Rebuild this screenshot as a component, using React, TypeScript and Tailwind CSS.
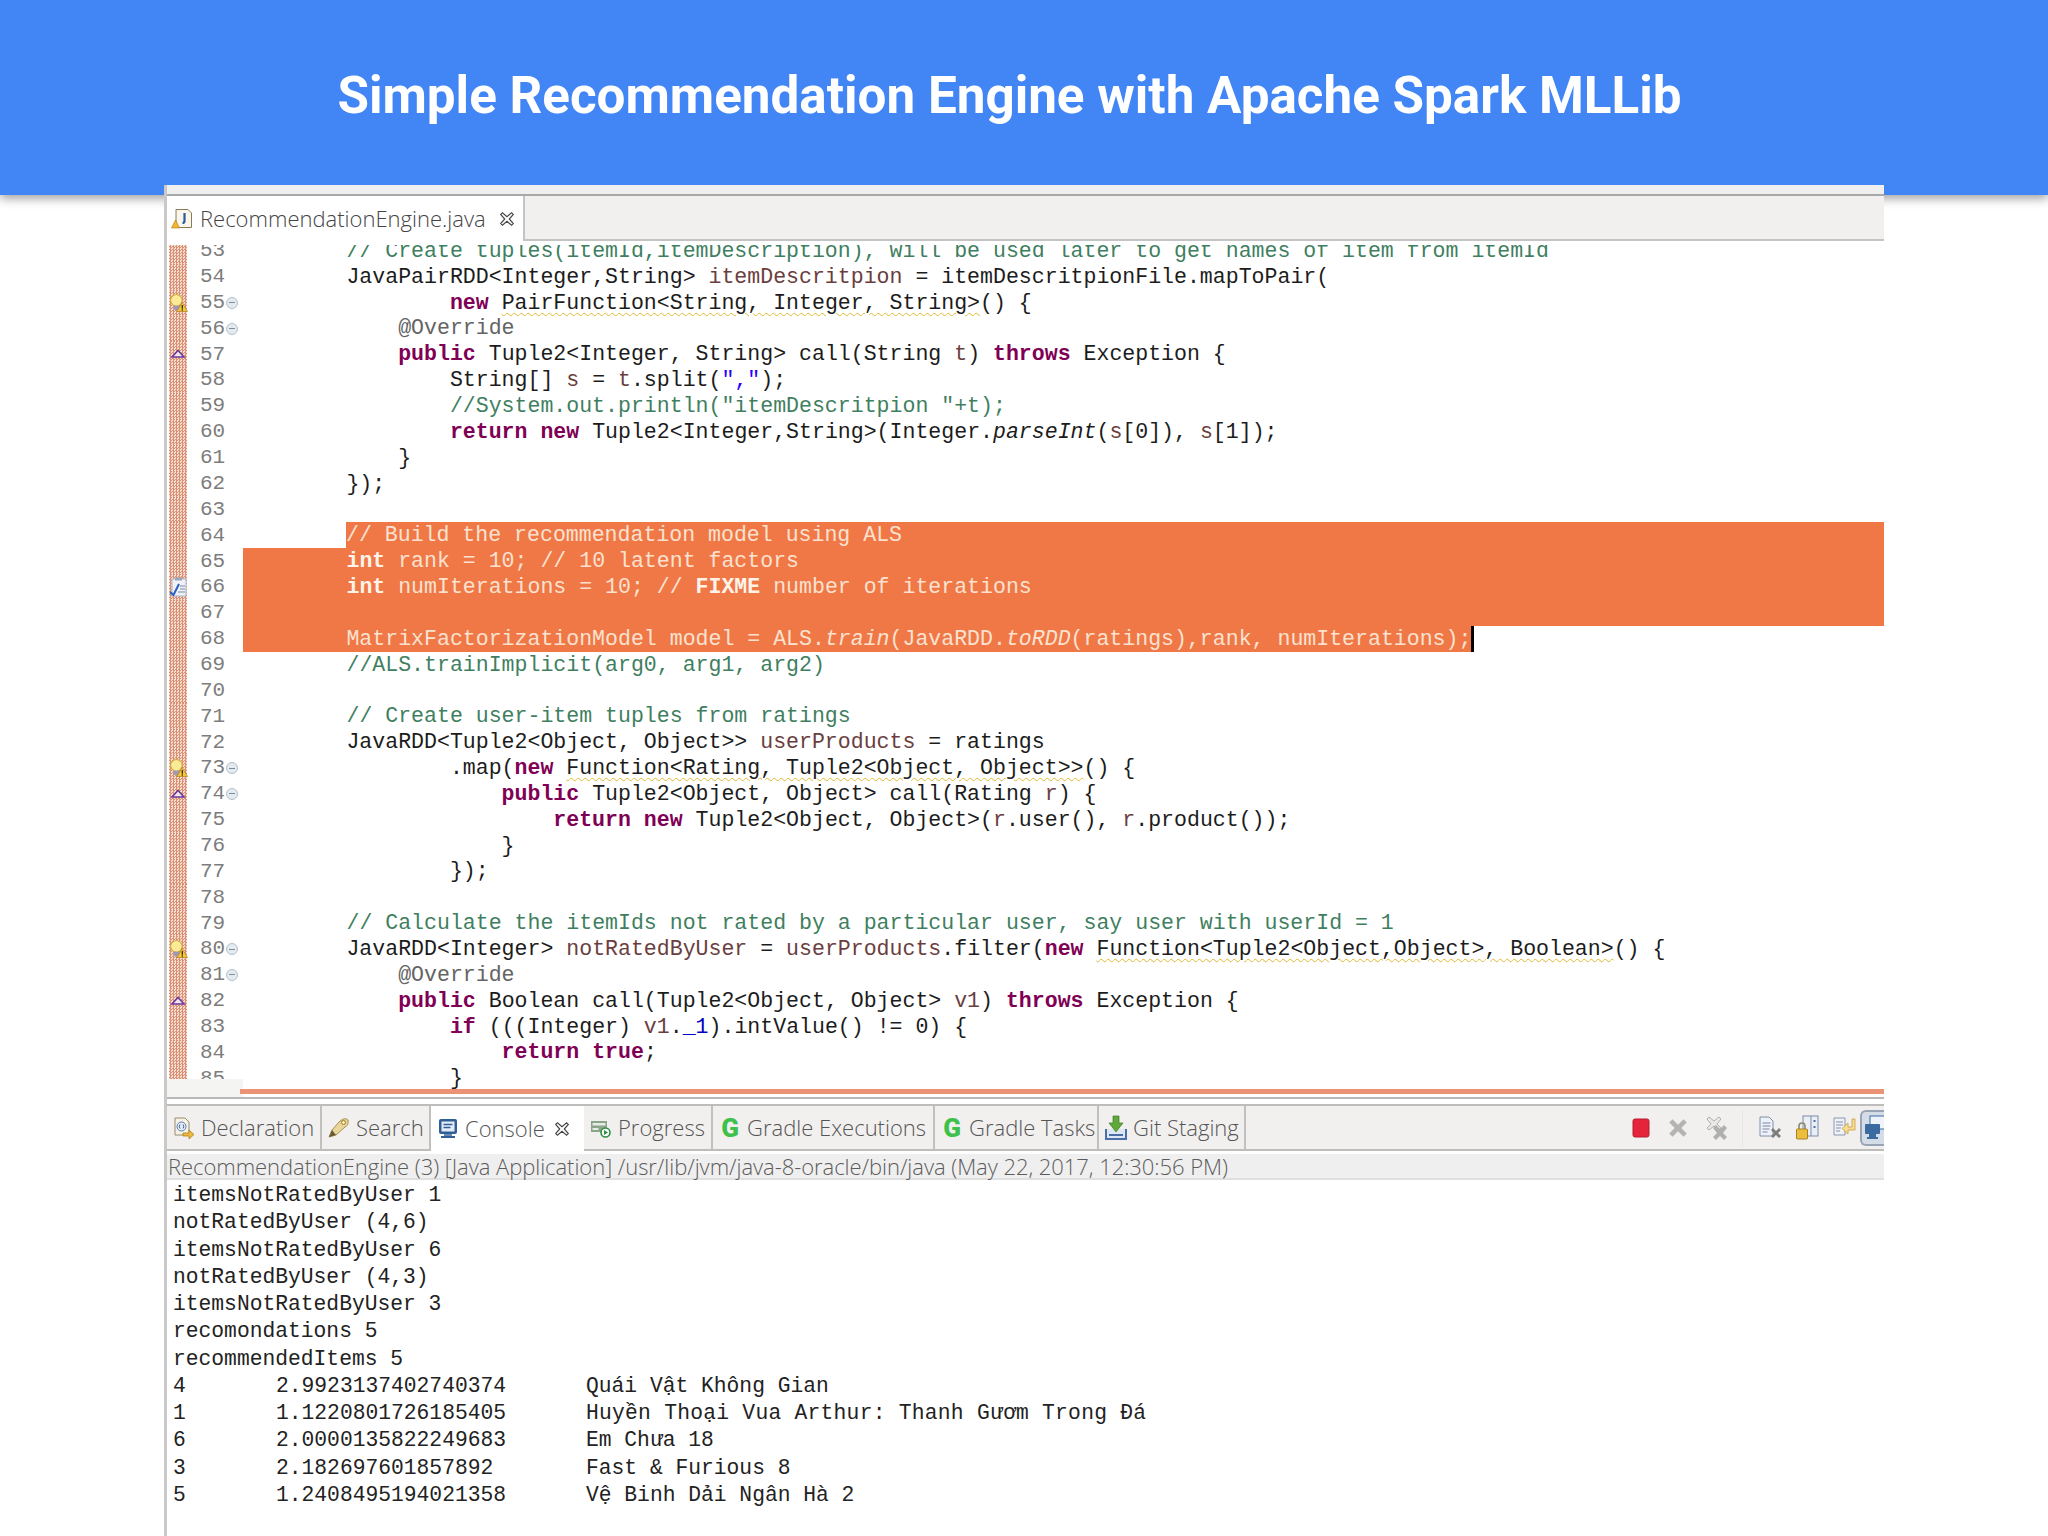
import React from "react";

const CODE: [number, string][] = [
  [53, "        «c|// Create tuples(itemId,itemDescription), will be used later to get names of item from itemId»"],
  [54, "        JavaPairRDD<Integer,String> «v|itemDescritpion» = itemDescritpionFile.mapToPair("],
  [55, "                «k|new» «w|PairFunction<String, Integer, String>»() {"],
  [56, "            «a|@Override»"],
  [57, "            «k|public» Tuple2<Integer, String> call(String «v|t») «k|throws» Exception {"],
  [58, "                String[] «v|s» = «v|t».split(«s|\",\"»);"],
  [59, "                «c|//System.out.println(\"itemDescritpion \"+t);»"],
  [60, "                «k|return» «k|new» Tuple2<Integer,String>(Integer.«i|parseInt»(«v|s»[0]), «v|s»[1]);"],
  [61, "            }"],
  [62, "        });"],
  [63, ""],
  [64, "// Build the recommendation model using ALS"],
  [65, "        «b|int» rank = 10; // 10 latent factors"],
  [66, "        «b|int» numIterations = 10; // «b|FIXME» number of iterations"],
  [67, ""],
  [68, "        MatrixFactorizationModel model = ALS.«i|train»(JavaRDD.«i|toRDD»(ratings),rank, numIterations);"],
  [69, "        «c|//ALS.trainImplicit(arg0, arg1, arg2)»"],
  [70, ""],
  [71, "        «c|// Create user-item tuples from ratings»"],
  [72, "        JavaRDD<Tuple2<Object, Object>> «v|userProducts» = ratings"],
  [73, "                .map(«k|new» «w|Function<Rating, Tuple2<Object, Object>>»() {"],
  [74, "                    «k|public» Tuple2<Object, Object> call(Rating «v|r») {"],
  [75, "                        «k|return» «k|new» Tuple2<Object, Object>(«v|r».user(), «v|r».product());"],
  [76, "                    }"],
  [77, "                });"],
  [78, ""],
  [79, "        «c|// Calculate the itemIds not rated by a particular user, say user with userId = 1»"],
  [80, "        JavaRDD<Integer> «v|notRatedByUser» = «v|userProducts».filter(«k|new» «w|Function<Tuple2<Object,Object>, Boolean>»() {"],
  [81, "            «a|@Override»"],
  [82, "            «k|public» Boolean call(Tuple2<Object, Object> «v|v1») «k|throws» Exception {"],
  [83, "                «k|if» (((Integer) «v|v1».«f|_1»).intValue() != 0) {"],
  [84, "                    «k|return» «k|true»;"],
  [85, "                }"],
];

const TOKEN_CLASS: Record<string, string> = {
  k: "font-bold text-[#7f0055]",
  c: "text-[#3f7f5f]",
  v: "text-[#6a3e3e]",
  s: "text-[#2a00ff]",
  a: "text-[#646464]",
  i: "italic",
  f: "text-[#0000c0]",
  b: "font-bold",
  w: "underline decoration-wavy decoration-[#e0b830] decoration-1 underline-offset-[3px]",
};

const SELECTED = [64, 65, 66, 67, 68];
const BULB = [55, 73, 80];
const OVERRIDE = [57, 74, 82];
const FOLD = [55, 56, 73, 74, 80, 81];

const CONSOLE_LINES = [
  "itemsNotRatedByUser 1",
  "notRatedByUser (4,6)",
  "itemsNotRatedByUser 6",
  "notRatedByUser (4,3)",
  "itemsNotRatedByUser 3",
  "recomondations 5",
  "recommendedItems 5",
];

const RESULTS = [
  { id: "4", score: "2.9923137402740374", title: "Quái Vật Không Gian" },
  { id: "1", score: "1.1220801726185405", title: "Huyền Thoại Vua Arthur: Thanh Gươm Trong Đá", wide: true },
  { id: "6", score: "2.0000135822249683", title: "Em Chưa 18" },
  { id: "3", score: "2.182697601857892", title: "Fast & Furious 8" },
  { id: "5", score: "1.2408495194021358", title: "Vệ Binh Dải Ngân Hà 2" },
];

function renderCode(src: string, selected: boolean) {
  const parts = src.split(/(«\w\|[^»]*»)/);
  return parts.map((part, i) => {
    const m = part.match(/^«(\w)\|([^»]*)»$/);
    if (!m) return <span key={i}>{part}</span>;
    const cls = selected ? (m[1] === "i" ? "italic" : "font-bold text-[#fff3ea]") : TOKEN_CLASS[m[1]];
    return (
      <span key={i} className={cls}>
        {m[2]}
      </span>
    );
  });
}

function BulbIcon() {
  return (
    <svg width="19" height="20" viewBox="0 0 18 18" className="shrink-0">
      <circle cx="7" cy="6.5" r="5.5" fill="#fbeb98" stroke="#d0ac3c" />
      <rect x="4.5" y="11.5" width="5" height="4" fill="#9a9ab8" />
      <path d="M12.5 8.5 L17.5 17 H7.5 Z" fill="#f6c83a" stroke="#a87a10" strokeWidth="0.6" />
      <rect x="12" y="11" width="1.2" height="3.4" fill="#222" />
      <rect x="12" y="15" width="1.2" height="1.2" fill="#222" />
    </svg>
  );
}

function OverrideIcon() {
  return (
    <svg width="16" height="10" viewBox="0 0 16 10" className="shrink-0">
      <path d="M8 1.5 L14 8 H2 Z" fill="#f4e6ee" stroke="#6b3a9a" strokeWidth="1.6" />
    </svg>
  );
}

function TaskIcon() {
  return (
    <svg width="18" height="20" viewBox="0 0 18 20" className="shrink-0">
      <rect x="3" y="2" width="14" height="17" fill="#eef2f8" stroke="#a8b4c8" />
      <rect x="6" y="0.5" width="7" height="3" fill="#9aa8bc" />
      <path d="M1 15 L4.5 18 L10 7" fill="none" stroke="#2a5fc0" strokeWidth="2" />
      <path d="M11 9h5M11 12h5M9 15h7" stroke="#7a8aa0" strokeWidth="1" />
    </svg>
  );
}

function CloseIcon() {
  return (
    <svg width="16" height="16" viewBox="0 0 14 14" className="shrink-0">
      <path
        d="M1.5 3 L3 1.5 L7 5 L11 1.5 L12.5 3 L9 7 L12.5 11 L11 12.5 L7 9 L3 12.5 L1.5 11 L5 7 Z"
        fill="#fff"
        stroke="#444"
        strokeWidth="1"
      />
    </svg>
  );
}

function FileTabIcon() {
  return (
    <svg width="22" height="22" viewBox="0 0 22 22" className="shrink-0">
      <path d="M5 1.5 H17 L20.5 5 V19.5 H5 Z" fill="#fbf6ea" stroke="#8a7a5a" />
      <path d="M13.5 5 V13 Q13.5 15 11.5 15" fill="none" stroke="#2a5aa0" strokeWidth="2.2" />
      <path d="M4.5 12 L8.5 20 H0.5 Z" fill="#f2b632" stroke="#a87a10" strokeWidth="0.6" />
    </svg>
  );
}

function DeclarationIcon() {
  return (
    <svg width="22" height="24" viewBox="0 0 22 24" className="shrink-0">
      <path d="M2 2 H12 L16 6 V19 H2 Z" fill="#f6f2e6" stroke="#9a8a68" />
      <circle cx="8.5" cy="10.5" r="4.5" fill="#e8eef8" stroke="#5a7ab0" />
      <path d="M7 8.5 Q5.5 10.5 7 12.5 M10 8.5 Q11.5 10.5 10 12.5" stroke="#3a5a90" fill="none" />
      <path d="M10 17 H16 V14 L21 18.5 L16 23 V20 H10 Z" fill="#f0b840" stroke="#a07818" strokeWidth="0.7" />
    </svg>
  );
}

function SearchIcon() {
  return (
    <svg width="24" height="22" viewBox="0 0 24 22" className="shrink-0">
      <path d="M2 20 L5 13 L13 4 Q18 0 21 3 Q22 8 18 10 L9 18 Z" fill="#e8d69a" stroke="#a89050" />
      <path d="M2 20 L5 13 L9 18 Z" fill="#6a5a3a" />
      <circle cx="16.5" cy="5.5" r="2" fill="#f6efc8" stroke="#a07a20" />
    </svg>
  );
}

function ConsoleIcon() {
  return (
    <svg width="20" height="22" viewBox="0 0 20 22" className="shrink-0">
      <rect x="1" y="1" width="18" height="15" rx="2" fill="#2f5f96" />
      <rect x="3.5" y="3.5" width="13" height="10" fill="#e4edf6" />
      <path d="M5.5 6.5h9M5.5 9.5h7" stroke="#2f5f96" strokeWidth="1.3" />
      <rect x="6" y="16" width="8" height="2" fill="#6a8ab0" />
      <rect x="3" y="18" width="14" height="2" fill="#2f5f96" />
    </svg>
  );
}

function ProgressIcon() {
  return (
    <svg width="22" height="20" viewBox="0 0 22 20" className="shrink-0">
      <rect x="1" y="3" width="16" height="11" fill="#8aa58a" />
      <rect x="2.5" y="5" width="13" height="2.5" fill="#e6ece6" />
      <rect x="2.5" y="10" width="6" height="2" fill="#e6ece6" />
      <circle cx="15.5" cy="14.5" r="4.5" fill="#fff" stroke="#2f8f45" strokeWidth="1.6" />
      <path d="M14 12 L18 14.5 L14 17 Z" fill="#2f8f45" />
    </svg>
  );
}

function GradleIcon() {
  return <span className="font-['Roboto',sans-serif] text-[26px] leading-none font-black text-[#3fc04a]">G</span>;
}

function GitStagingIcon() {
  return (
    <svg width="24" height="26" viewBox="0 0 24 26" className="shrink-0">
      <path d="M2 14 V24 H22 V14" fill="#dde6f4" stroke="#4a6ea8" strokeWidth="2" />
      <rect x="5" y="19" width="14" height="2" fill="#4a6ea8" />
      <path d="M9 1 H15 V8 H19 L12 17 L5 8 H9 Z" fill="#5fa83a" stroke="#3f7f25" strokeWidth="0.7" />
    </svg>
  );
}

function Toolbar() {
  return (
    <div className="flex h-full flex-1 items-center justify-end overflow-hidden">
      <svg width="18" height="20" viewBox="0 0 18 20" className="mr-[17px] shrink-0">
        <rect x="1" y="1" width="16" height="18" rx="2" fill="#e3243a" stroke="#b81c2e" />
      </svg>
      <svg width="22" height="22" viewBox="0 0 20 20" className="mr-[16px] shrink-0">
        <path d="M2 5 L5 2 L10 7 L15 2 L18 5 L13 10 L18 15 L15 18 L10 13 L5 18 L2 15 L7 10 Z" fill="#b4b4b2" />
      </svg>
      <svg width="24" height="26" viewBox="0 0 24 26" className="mr-[13px] shrink-0">
        <path d="M2 4 L4 2 L9 6 L14 2 L16 4 L12 9 L16 13 L14 15 L9 11 L4 15 L2 13 L6 9 Z" fill="#e8e8e6" stroke="#b0b0ae" />
        <path d="M8 13 L11 10 L15 14 L19 10 L22 13 L18 18 L22 22 L19 25 L15 21 L11 25 L8 22 L12 18 Z" fill="#b0b0ae" />
      </svg>
      <div className="mr-[15px] h-[36px] w-px shrink-0 bg-[#e6e6e4]" />
      <svg width="24" height="24" viewBox="0 0 24 24" className="mr-[13px] shrink-0">
        <path d="M2 1 H11 L15 5 V20 H2 Z" fill="#eef1f7" stroke="#8090ac" />
        <path d="M4.5 7h8M4.5 10h8M4.5 13h7M4.5 16h5" stroke="#7a8aa8" />
        <path d="M13 14 L15 12 L18 15 L21 12 L23 14 L20 17 L23 20 L21 22 L18 19 L15 22 L13 20 L16 17 Z" fill="#7c7c7c" />
      </svg>
      <svg width="24" height="26" viewBox="0 0 24 26" className="mr-[14px] shrink-0">
        <rect x="8" y="1" width="15" height="20" fill="#eaeff6" stroke="#7c8ca8" />
        <path d="M16 1 V21" stroke="#7c8ca8" />
        <rect x="18.5" y="5" width="2" height="2" fill="#4a6ea8" />
        <rect x="18.5" y="11" width="2" height="2" fill="#4a6ea8" />
        <path d="M4 14 V11 Q4 8 7 8 Q10 8 10 11 V14" fill="none" stroke="#8a8a70" strokeWidth="1.6" />
        <rect x="1.5" y="14" width="11" height="10" rx="1" fill="#edbe3e" stroke="#a88220" />
      </svg>
      <svg width="24" height="24" viewBox="0 0 24 24" className="mr-[3px] shrink-0">
        <path d="M1 2 H12 V19 H1 Z" fill="#f0f2f7" stroke="#8a98b0" />
        <path d="M3 6h7M3 9h7M3 12h5M3 15h4" stroke="#8090a8" />
        <path d="M19 3 H22 V14 H15 V18 L9 12.5 L15 7 V11 H19 Z" fill="#f6dc92" stroke="#c8a040" strokeWidth="0.8" />
      </svg>
      <div className="flex h-[36px] w-[24px] shrink-0 overflow-hidden rounded-l-[6px] border-2 border-r-0 border-[#98a4b4] bg-[#d4dce8] pl-[2px] pt-[3px]">
        <svg width="24" height="28" viewBox="0 0 24 28" className="shrink-0">
          <rect x="6" y="1" width="16" height="13" fill="#eef3fa" stroke="#3a6aa0" />
          <rect x="1" y="9" width="15" height="10" rx="1" fill="#3a6aa0" />
          <rect x="5" y="19" width="7" height="3" fill="#3a6aa0" />
          <rect x="3" y="22" width="11" height="2" fill="#3a6aa0" />
        </svg>
      </div>
    </div>
  );
}

const TABS = [
  { label: "Declaration", icon: <DeclarationIcon />, w: "w-[155px]" },
  { label: "Search", icon: <SearchIcon />, w: "w-[109px]" },
  { label: "Console", icon: <ConsoleIcon />, w: "w-[153px]", active: true },
  { label: "Progress", icon: <ProgressIcon />, w: "w-[129px]" },
  { label: "Gradle Executions", icon: <GradleIcon />, w: "w-[222px]" },
  { label: "Gradle Tasks", icon: <GradleIcon />, w: "w-[164px]" },
  { label: "Git Staging", icon: <GitStagingIcon />, w: "w-[147px]" },
];

const UI_FONT = "font-['Open_Sans',sans-serif] font-light";

export default function App() {
  return (
    <div className="flex h-[1536px] w-[2048px] flex-col overflow-hidden bg-white">
      <header className="flex h-[195px] shrink-0 items-center justify-center bg-[#4285f4] pr-[29px] pb-[2px] shadow-[0_3px_10px_rgba(0,0,0,0.4)]">
        <h1 className="font-['Roboto',sans-serif] text-[51.2px] font-bold text-white">
          Simple Recommendation Engine with Apache Spark MLLib
        </h1>
      </header>

      <main className="relative z-10 -mt-[10px] ml-[164px] flex w-[1720px] flex-1 flex-col overflow-hidden border-l-[3px] border-[#c9c9c9] bg-white">
        <div className="h-[11px] shrink-0 border-b-2 border-[#a8a8a8] bg-[#efefef]" />

        {/* editor tab bar */}
        <div className="flex h-[45px] shrink-0">
          <div className={`flex w-[356px] items-center gap-[7px] pl-[4px] text-[22px] text-[#444] ${UI_FONT}`}>
            <FileTabIcon />
            <span>RecommendationEngine.java</span>
            <span className="ml-[6px]">
              <CloseIcon />
            </span>
          </div>
          <div className="flex-1 border-b-2 border-l-2 border-[#c4c4c4] bg-[#f1f0ef]" />
        </div>

        {/* editor */}
        <div className="flex h-[856px] shrink-0 overflow-hidden pt-[4px]">
          <div className="flex w-[76px] shrink-0 flex-col bg-[#f4f4f3]">
            <div className="h-[834px] shrink-0 overflow-hidden bg-white">
              <div className="-mt-[7px]">
                {CODE.map(([n]) => (
                  <div key={n} className="flex h-[25.86px] items-center pl-[2px]">
                    <div className="flex h-full w-[18px] shrink-0 items-center justify-center bg-[repeating-conic-gradient(#dc8f72_0%_25%,#f4dfd4_0%_50%)] bg-[length:3px_3px]">
                      {BULB.includes(n) && <BulbIcon />}
                      {OVERRIDE.includes(n) && <OverrideIcon />}
                      {n === 66 && <TaskIcon />}
                    </div>
                    <span className="ml-[13px] w-[25px] font-['Liberation_Mono',monospace] text-[21px] text-[#7d7d7d]">
                      {n}
                    </span>
                    {FOLD.includes(n) && (
                      <span className="ml-[1px] flex h-[12px] w-[12px] items-center justify-center rounded-full border border-[#b4c0ca] bg-[#e4ebf0]">
                        <span className="h-px w-[6px] bg-[#7c8c98]" />
                      </span>
                    )}
                  </div>
                ))}
              </div>
            </div>
          </div>

          <div className="flex min-w-0 flex-1 flex-col">
            <div className="h-[844px] shrink-0 overflow-hidden">
              <div className="-mt-[7px] font-['Liberation_Mono',monospace] text-[21.55px] text-[#1c1c1c]">
                {CODE.map(([n, src]) => {
                  const sel = SELECTED.includes(n);
                  return (
                    <div key={n} className={`flex h-[25.86px] items-center whitespace-pre ${sel && n !== 64 ? "bg-[#f07847] text-[#fbe2d0]" : ""}`}>
                      {n === 64 ? (
                        <>
                          <div className="h-full w-[103px] shrink-0" />
                          <div className="flex h-full flex-1 items-center bg-[#f07847] text-[#fbe2d0]">{src}</div>
                        </>
                      ) : (
                        <span>{renderCode(src, sel)}</span>
                      )}
                      {n === 68 && <span className="h-full w-[3px] bg-black" />}
                      {n === 68 && <span className="h-full flex-1 bg-white" />}
                    </div>
                  );
                })}
              </div>
            </div>
            <div className="-ml-[3px] h-[5px] shrink-0 bg-[#ec9376]" />
            <div className="flex-1" />
          </div>
        </div>

        <div className="h-[7px] shrink-0 border-t-2 border-[#b8b8b6] bg-white" />

        {/* view tabs */}
        <div className="flex h-[47px] shrink-0 border-y-2 border-[#bdbdbb] bg-[#f1f0ef]">
          {TABS.map((t) => (
            <div
              key={t.label}
              className={`flex shrink-0 items-center text-[22px] text-[#555] ${t.w} ${UI_FONT} ${t.active ? "-mb-[2px] bg-white" : "border-r-2 border-[#c0c0be]"}`}
            >
              <span className="flex w-[34px] shrink-0 items-center justify-center">{t.icon}</span>
              <span className="whitespace-nowrap">{t.label}</span>
              {t.active && (
                <span className="ml-[9px]">
                  <CloseIcon />
                </span>
              )}
            </div>
          ))}
          <Toolbar />
        </div>

        {/* console */}
        <div className={`mt-[3px] flex h-[26px] shrink-0 items-center border-b-2 border-[#e0e0e0] bg-[#f0efef] pl-[1px] text-[22px] tracking-[-0.05px] whitespace-nowrap text-[#5c5c5c] ${UI_FONT}`}>
          RecommendationEngine (3) [Java Application] /usr/lib/jvm/java-8-oracle/bin/java (May 22, 2017, 12:30:56 PM)
        </div>
        <div className="pl-[6px] pt-[2px] font-['Liberation_Mono',monospace] text-[21.3px] leading-[27.25px] whitespace-pre text-[#222]">
          {CONSOLE_LINES.map((line, i) => (
            <div key={i}>{line}</div>
          ))}
          {RESULTS.map((r) => (
            <div key={r.id} className="flex">
              <span className="w-[103px] shrink-0">{r.id}</span>
              <span className="w-[310px] shrink-0">{r.score}</span>
              <span className={r.wide ? "tracking-[0.25px]" : ""}>{r.title}</span>
            </div>
          ))}
        </div>
      </main>
    </div>
  );
}
